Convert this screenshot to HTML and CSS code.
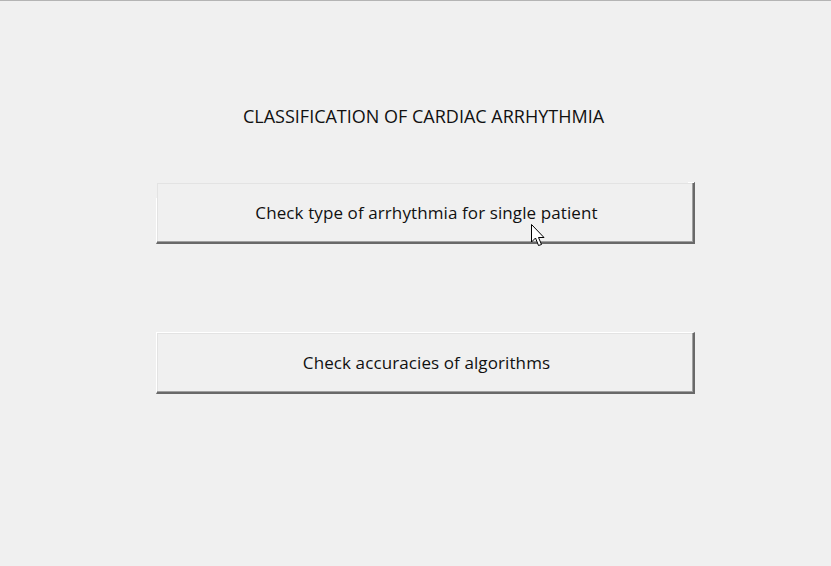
FILE: index.html
```html
<!DOCTYPE html>
<html>
<head>
<meta charset="utf-8">
<link rel="stylesheet" href="styles.css">
</head>
<body>
<div class="window">
  <div class="content">
    <div class="title">CLASSIFICATION OF CARDIAC ARRHYTHMIA</div>
    <div class="btn btn-hover">Check type of arrhythmia for single patient
      <svg class="cursor" width="15" height="24" viewBox="0 0 15 24">
        <path d="M0.5 0.5 L0.5 18 L4.5 14 L7.5 21.5 L10.5 20.5 L7.5 13.5 L13 13.5 Z" fill="#fff" stroke="#000" stroke-width="1" stroke-linejoin="miter"/>
      </svg>
    </div>
    <div class="btn">Check accuracies of algorithms</div>
  </div>
</div>
</body>
</html>
```
FILE: styles.css
```css
html, body {
  margin: 0;
  padding: 0;
  background: #f0f0f0;
}
.window {
  width: 831px;
  height: 566px;
  box-sizing: border-box;
  border-top: 1px solid #b4b4b4;
  background: #f0f0f0;
  font-family: "Open Sans", "Noto Sans", sans-serif;
  color: #111111;
}
.content {
  display: flex;
  flex-direction: column;
  width: 539px;
  margin-left: 156px;
  padding-top: 99px;
}
.title {
  width: 535px;
  text-align: center;
  font-size: 18px;
  line-height: 32px;
  margin-bottom: 50px;
}
.btn {
  position: relative;
  height: 62px;
  box-sizing: border-box;
  display: flex;
  align-items: center;
  justify-content: center;
  font-size: 17px;
  letter-spacing: 0.1px;
  padding-left: 3px;
  border-top: 1px solid #ffffff;
  border-left: 1px solid #ffffff;
  border-right: 2px solid #696969;
  border-bottom: 2px solid #696969;
  box-shadow: inset -1px -1px 0 #a0a0a0, inset 1px 1px 0 #e3e3e3;
  margin-bottom: 88px;
}
.btn-hover {
  border-top-color: #f0f0f0;
}
.btn-hover::before {
  content: "";
  position: absolute;
  left: -1px;
  top: -1px;
  width: 1px;
  height: 16px;
  background: #f0f0f0;
}
.btn-hover::after {
  content: "";
  position: absolute;
  right: -1px;
  top: -1px;
  width: 6px;
  height: 1px;
  background: #ffffff;
}
.cursor {
  position: absolute;
  left: 374px;
  top: 41px;
}
```
